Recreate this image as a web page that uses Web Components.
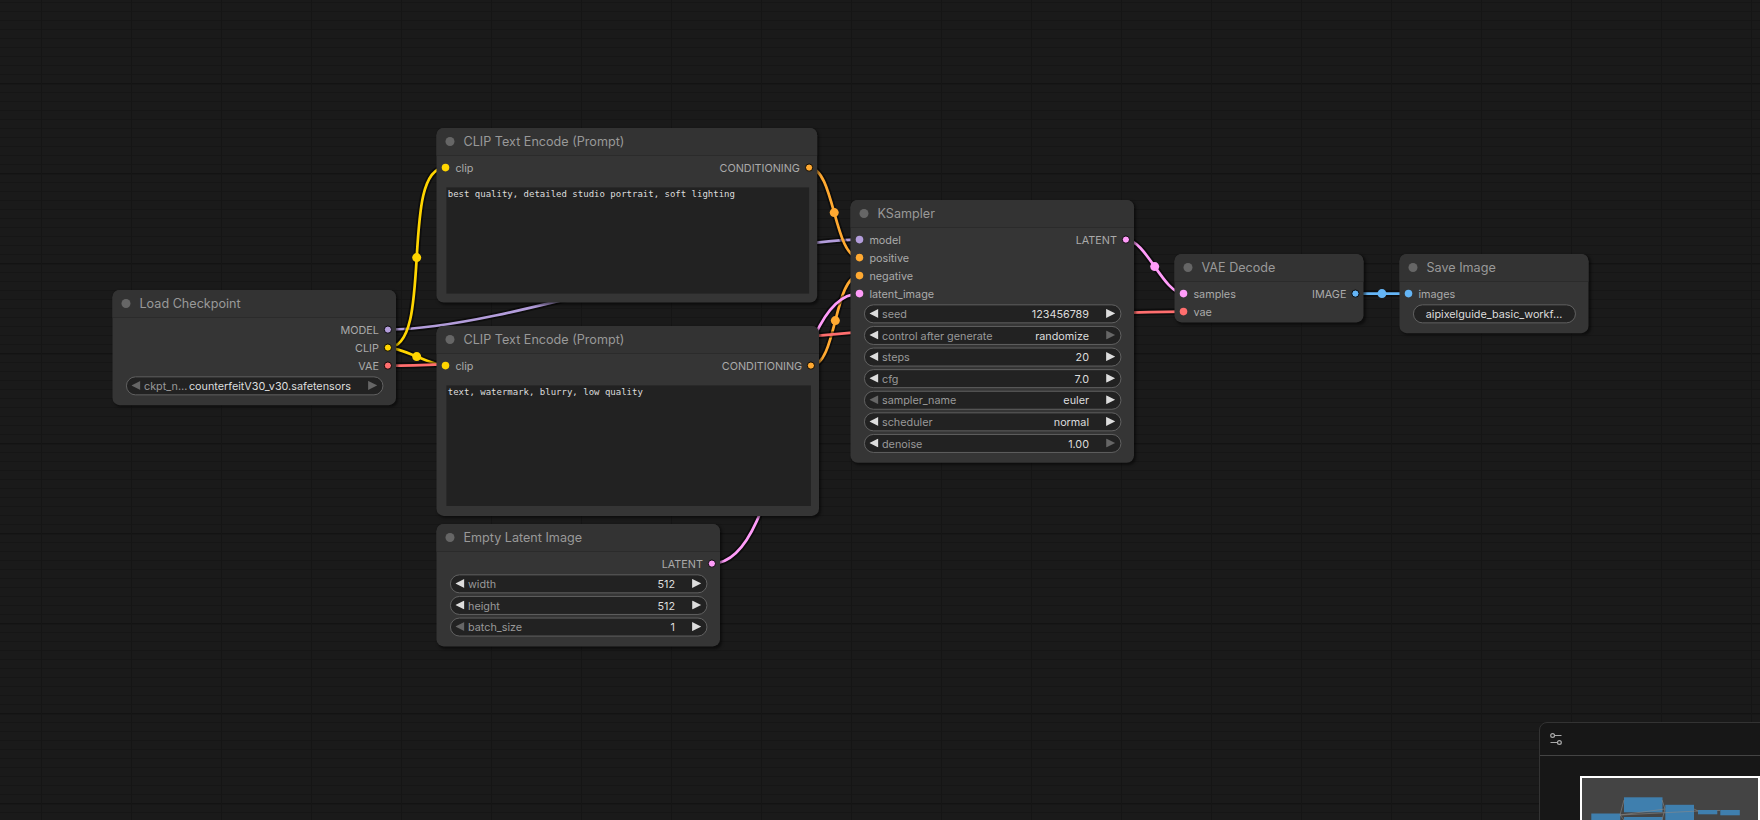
<!DOCTYPE html>
<html lang="en">
<head>
<meta charset="utf-8">
<title>Workflow</title>
<style>
    body {
        margin: 0;
        overflow: hidden;
        background: #1a1a1a;
    }
</style>
</head>
<body>
<graph-canvas>
    <graph-links></graph-links>

    <graph-node style="left:125px; top:320px; width:315px; height:128px" title="Load Checkpoint">
        <node-slot slot="outputs" kind="out" color="#B39DDB" label="MODEL"></node-slot>
        <node-slot slot="outputs" kind="out" color="#FFD500" label="CLIP"></node-slot>
        <node-slot slot="outputs" kind="out" color="#FF6E6E" label="VAE"></node-slot>
        <node-widget label="ckpt_n…" value="counterfeitV30_v30.safetensors" off="both"></node-widget>
    </graph-node>

    <graph-node style="left:485px; top:140px; width:422.8px; height:194.3px" title="CLIP Text Encode (Prompt)">
        <node-slot slot="inputs" color="#FFD500" label="clip"></node-slot>
        <node-slot slot="outputs" kind="out" color="#FFA931" label="CONDITIONING"></node-slot>
        <prompt-text>best quality, detailed studio portrait, soft lighting</prompt-text>
    </graph-node>

    <graph-node style="left:485px; top:360px; width:425.3px; height:210.6px" title="CLIP Text Encode (Prompt)">
        <node-slot slot="inputs" color="#FFD500" label="clip"></node-slot>
        <node-slot slot="outputs" kind="out" color="#FFA931" label="CONDITIONING"></node-slot>
        <prompt-text>text, watermark, blurry, low quality</prompt-text>
    </graph-node>

    <graph-node style="left:485px; top:580px; width:315px; height:136px" title="Empty Latent Image">
        <node-slot slot="outputs" kind="out" color="#FF9CF9" label="LATENT"></node-slot>
        <node-widget label="width" value="512"></node-widget>
        <node-widget label="height" value="512"></node-widget>
        <node-widget label="batch_size" value="1" off="left"></node-widget>
    </graph-node>

    <graph-node style="left:945px; top:220px; width:315px; height:292px" title="KSampler">
        <node-slot slot="inputs" color="#B39DDB" label="model"></node-slot>
        <node-slot slot="inputs" color="#FFA931" label="positive"></node-slot>
        <node-slot slot="inputs" color="#FFA931" label="negative"></node-slot>
        <node-slot slot="inputs" color="#FF9CF9" label="latent_image"></node-slot>
        <node-slot slot="outputs" kind="out" color="#FF9CF9" label="LATENT"></node-slot>
        <node-widget label="seed" value="123456789"></node-widget>
        <node-widget label="control after generate" value="randomize" off="right"></node-widget>
        <node-widget label="steps" value="20"></node-widget>
        <node-widget label="cfg" value="7.0"></node-widget>
        <node-widget label="sampler_name" value="euler" off="left"></node-widget>
        <node-widget label="scheduler" value="normal"></node-widget>
        <node-widget label="denoise" value="1.00" off="right"></node-widget>
    </graph-node>

    <graph-node style="left:1305px; top:280px; width:210px; height:76px" title="VAE Decode">
        <node-slot slot="inputs" color="#FF9CF9" label="samples"></node-slot>
        <node-slot slot="inputs" color="#FF6E6E" label="vae"></node-slot>
        <node-slot slot="outputs" kind="out" color="#64B5F6" label="IMAGE"></node-slot>
    </graph-node>

    <graph-node style="left:1555px; top:280px; width:210px; height:88px" title="Save Image">
        <node-slot slot="inputs" color="#64B5F6" label="images"></node-slot>
        <node-widget value="aipixelguide_basic_workf…"></node-widget>
    </graph-node>

    <mini-map slot="overlay"></mini-map>
</graph-canvas>

<script>
class GraphCanvas extends HTMLElement {
    constructor() {
        super()
        this.attachShadow({ mode: 'open' })
        this.shadowRoot.innerHTML = `
            <style>
            :host {
                display: block;
                position: relative;
                width: 1760px;
                height: 820px;
                overflow: hidden;
                font-family: Inter, "Liberation Sans", sans-serif;
                background:
                    repeating-linear-gradient(90deg, #151515 0 1px, transparent 1px 90px) 41px 0,
                    repeating-linear-gradient(#131313 0 1px, #171717 1px 2px, transparent 2px 90px) 0 -7px / 100% 900px,
                    repeating-linear-gradient(#161616 0 1px, transparent 1px 9px) 0 -7px / 100% 900px,
                    #1a1a1a;
            }
            /* everything inside is in graph units, zoom is 0.9 */
            .world {
                position: absolute;
                left: 0;
                top: 0;
                transform: translate(0, 2px) scale(0.9);
                transform-origin: 0 0;
            }
            </style>
            <div class="world"><slot></slot></div>
            <slot name="overlay"></slot>
        `
    }
}

class GraphLinks extends HTMLElement {
    constructor() {
        super()
        this.attachShadow({ mode: 'open' })
    }

    // x1, y1, x2, y2, color
    getLinks() {
        return [
            [431, 364, 955, 264, '#B39DDB'],
            [431, 384, 495, 184, '#FFD500'],
            [431, 384, 495, 404, '#FFD500'],
            [898.8, 184, 955, 284, '#FFA931'],
            [901.3, 404, 955, 304, '#FFA931'],
            [791, 624, 955, 324, '#FF9CF9'],
            [1251, 264, 1315, 324, '#FF9CF9'],
            [431, 404, 1315, 344, '#FF6E6E'],
            [1506, 324, 1565, 324, '#64B5F6'],
        ]
    }

    getLink([x1, y1, x2, y2, color]) {
        const bend = Math.hypot(x2 - x1, y2 - y1) * 0.25
        const d = `M${x1} ${y1} C${x1 + bend} ${y1} ${x2 - bend} ${y2} ${x2} ${y2}`
        return `
            <path d="${d}" stroke="#000" stroke-opacity=".5" stroke-width="7"/>
            <path d="${d}" stroke="${color}" stroke-width="3"/>
            <circle cx="${(x1 + x2) / 2}" cy="${(y1 + y2) / 2}" r="5" fill="${color}"/>
        `
    }

    connectedCallback() {
        this.shadowRoot.innerHTML = `
            <style>
            :host {
                display: block;
                position: absolute;
                left: 0;
                top: 0;
            }
            </style>
            <svg width="1960" height="915" fill="none">${this.getLinks().map(this.getLink).join('')}</svg>
        `
    }
}

class GraphNode extends HTMLElement {
    constructor() {
        super()
        this.attachShadow({ mode: 'open' })
    }

    connectedCallback() {
        this.shadowRoot.innerHTML = `
            <style>
            :host {
                position: absolute;
                display: flex;
                flex-direction: column;
                box-sizing: border-box;
                border-radius: 8px;
                background: #353535;
                box-shadow: 2px 2px 3px rgba(0, 0, 0, 0.5);
            }
            header {
                display: flex;
                align-items: center;
                flex: none;
                height: 30px;
                box-sizing: border-box;
                padding-left: 10px;
                gap: 10px;
                border-radius: 8px 8px 0 0;
                background: #333;
                color: #999;
                font-size: 14px;
                line-height: 30px;
                white-space: nowrap;
            }
            header i {
                width: 10px;
                height: 10px;
                border-radius: 50%;
                background: #666;
            }
            .slots {
                display: flex;
                justify-content: space-between;
                flex: none;
                padding-top: 3px;
                border-top: 1px solid #2b2b2b;
            }
            .widgets {
                display: flex;
                flex-direction: column;
                flex: 1;
                gap: 4px;
                margin-top: 2px;
            }
            </style>
            <header><i></i><span>${this.getAttribute('title')}</span></header>
            <div class="slots">
                <div><slot name="inputs"></slot></div>
                <div><slot name="outputs"></slot></div>
            </div>
            <div class="widgets"><slot></slot></div>
        `
    }
}

class NodeSlot extends HTMLElement {
    constructor() {
        super()
        this.attachShadow({ mode: 'open' })
    }

    connectedCallback() {
        this.shadowRoot.innerHTML = `
            <style>
            :host {
                display: flex;
                align-items: center;
                height: 20px;
                padding: 0 5px;
                gap: 6px;
                color: #aaa;
                font-size: 12px;
                line-height: 20px;
                white-space: nowrap;
            }
            :host([kind=out]) {
                flex-direction: row-reverse;
                padding-right: 4px;
                gap: 5px;
            }
            svg {
                flex: none;
            }
            span {
                position: relative;
                top: 1px;
            }
            </style>
            <svg width="10" height="10">${this.getDot(this.getAttribute('color'))}</svg>
            <span>${this.getAttribute('label')}</span>
        `
    }

    getDot(color) {
        return this.getAttribute('kind') === 'out'
            ? `<circle cx="5" cy="5" r="4" fill="${color}" stroke="#000" stroke-width="1"/>`
            : `<circle cx="5" cy="5" r="4.2" fill="${color}"/>`
    }
}

class NodeWidget extends HTMLElement {
    constructor() {
        super()
        this.attachShadow({ mode: 'open' })
    }

    connectedCallback() {
        const off = this.getAttribute('off') || ''
        const label = this.getAttribute('label')
        const left = off === 'left' || off === 'both' ? '#666' : '#ddd'
        const right = off === 'right' || off === 'both' ? '#666' : '#ddd'
        this.shadowRoot.innerHTML = `
            <style>
            :host {
                display: flex;
                align-items: center;
                flex: none;
                height: 21px;
                margin: -0.5px 14.5px;
                padding: 0 5.5px;
                box-sizing: border-box;
                border: 1px solid #666;
                border-radius: 10.5px;
                background: #222;
                color: #999;
                font-size: 12px;
                line-height: 19px;
                white-space: nowrap;
            }
            .label {
                margin-left: 4px;
            }
            .value {
                margin-left: auto;
                margin-right: 19px;
                color: #ddd;
            }
            .only {
                margin: 0 auto;
            }
            svg {
                flex: none;
            }
            </style>
            ${label ? `
                <svg width="10" height="10"><path d="M10 0L0 5L10 10Z" fill="${left}"/></svg>
                <span class="label">${label}</span>
                <span class="value">${this.getAttribute('value')}</span>
                <svg width="10" height="10"><path d="M0 0L10 5L0 10Z" fill="${right}"/></svg>
            ` : `<span class="value only">${this.getAttribute('value')}</span>`}
        `
    }
}

class PromptText extends HTMLElement {
    constructor() {
        super()
        this.attachShadow({ mode: 'open' })
        this.shadowRoot.innerHTML = `
            <style>
            :host {
                display: block;
                flex: 1;
                box-sizing: border-box;
                margin: 9.5px 9px 10.2px 10.5px;
                padding: 2px;
                background: #222;
                color: #ddd;
                font: 10px/12px "DejaVu Sans Mono", monospace;
            }
            </style>
            <slot></slot>
        `
    }
}

class MiniMap extends HTMLElement {
    constructor() {
        super()
        this.attachShadow({ mode: 'open' })
        this.shadowRoot.innerHTML = `
            <style>
            :host {
                position: absolute;
                left: 1539px;
                top: 722px;
                width: 260px;
                height: 240px;
                box-sizing: border-box;
                border: 1px solid #333;
                border-radius: 8px 0 0 0;
                background: #171717;
            }
            header {
                height: 32px;
                padding: 0 10px;
                display: flex;
                align-items: center;
                border-bottom: 1px solid #444;
            }
            .view {
                margin: 20px 0 0 40px;
                display: block;
            }
            </style>
            <header>
                <svg width="12" height="12" fill="none" stroke="#aaa" stroke-width="1.2">
                    <circle cx="2.6" cy="2.5" r="1.9"/>
                    <path d="M4.5 2.5H11.5M.5 9.5H7.5"/>
                    <circle cx="9.4" cy="9.5" r="1.9"/>
                </svg>
            </header>
            <svg class="view" width="190" height="100">
                <rect x="1" y="1" width="178" height="98" fill="#444" stroke="#fff" stroke-width="2"/>
                <g fill="#3f7fae">
                    <rect x="11.3" y="37.5" width="29" height="12"/>
                    <rect x="44" y="21.3" width="38.5" height="15"/>
                    <rect x="44" y="41" width="38.5" height="17"/>
                    <rect x="85.3" y="28.8" width="28.7" height="26"/>
                    <rect x="118" y="34" width="19.3" height="4.3"/>
                    <rect x="140.3" y="34" width="19.5" height="5.3"/>
                </g>
                <g stroke="#888" stroke-opacity=".6" fill="none">
                    <path d="M40 39L85 33M40 39L44 24M40 39L44 44M40 39L118 35M82 24L85 33M82 44L85 33M114 33L118 35M137 34.5H140"/>
                </g>
            </svg>
        `
    }
}

customElements.define('graph-canvas', GraphCanvas)
customElements.define('graph-links', GraphLinks)
customElements.define('graph-node', GraphNode)
customElements.define('node-slot', NodeSlot)
customElements.define('node-widget', NodeWidget)
customElements.define('prompt-text', PromptText)
customElements.define('mini-map', MiniMap)
</script>
</body>
</html>
